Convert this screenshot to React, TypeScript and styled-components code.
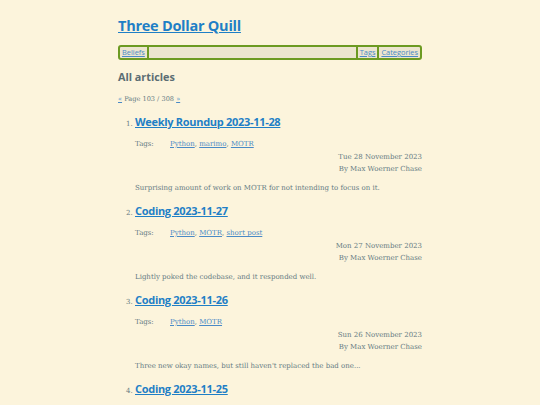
import React from "react";
import styled, { createGlobalStyle } from "styled-components";

const Global = createGlobalStyle`
  html, body { margin: 0; padding: 0; background: #fcf4dc; }
  body { font-family: "DejaVu Serif", serif; color: #657b83; }
  a { color: #2a7fc1; }
`;

const Page = styled.div`
  width: 304px;
  margin: 0 auto;
  padding-top: 15px;
`;

const Title = styled.h1`
  margin: 0;
  font-family: "Open Sans", sans-serif;
  font-weight: 700;
  font-size: 14.5px;
  letter-spacing: -0.25px;
  line-height: 22px;
  a { color: #1f7fc6; }
`;

const Nav = styled.nav`
  margin-top: 8px;
  display: flex;
  height: 11px;
  border: 2px solid #6c9a22;
  border-radius: 3px;
  background: #ece5cf;
  font-family: "Open Sans", sans-serif;
  font-size: 7.4px;
  line-height: 11px;
`;

const NavItem = styled.a<{ $side: "left" | "right" }>`
  padding: 0 2px;
  color: #4a8ac6;
  ${(p) => (p.$side === "right" ? "border-right: 2px solid #6c9a22;" : "border-left: 2px solid #6c9a22;")}
`;

const Spacer = styled.div`
  flex: 1;
`;

const Heading = styled.h2`
  margin: 8px 0 0;
  font-family: "Open Sans", sans-serif;
  font-weight: 700;
  font-size: 10.8px;
  line-height: 18px;
  color: #5b6d73;
`;

const Pager = styled.div`
  margin-top: 8px;
  font-size: 6.6px;
  line-height: 10px;
  color: #657b83;
  a { color: #4a8ac6; }
`;

const List = styled.ol`
  margin: 9px 0 0;
  padding-left: 17px;
`;

const Item = styled.li`
  font-size: 7px;
  color: #657b83;
  margin-bottom: 8px;
  &::marker { font-size: 7px; }
`;

const ItemTitle = styled.h3`
  display: inline;
  margin: 0;
  font-family: "Open Sans", sans-serif;
  font-weight: 700;
  font-size: 11px;
  letter-spacing: -0.3px;
  line-height: 18px;
  a { color: #1f7fc6; }
`;

const TagRow = styled.div`
  display: flex;
  margin-top: 8px;
  line-height: 10px;
`;

const TagLabel = styled.span`
  width: 35px;
`;

const TagLinks = styled.span`
  a { color: #4a8ac6; }
`;

const Meta = styled.div`
  margin-top: 2px;
  text-align: right;
  line-height: 12px;
`;

const Summary = styled.p`
  margin: 7px 0 0;
  line-height: 12px;
`;

type Article = { title: string; tags: string[]; date: string; summary: string };

const articles: Article[] = [
  {
    title: "Weekly Roundup 2023-11-28",
    tags: ["Python", "marimo", "MOTR"],
    date: "Tue 28 November 2023",
    summary: "Surprising amount of work on MOTR for not intending to focus on it.",
  },
  {
    title: "Coding 2023-11-27",
    tags: ["Python", "MOTR", "short post"],
    date: "Mon 27 November 2023",
    summary: "Lightly poked the codebase, and it responded well.",
  },
  {
    title: "Coding 2023-11-26",
    tags: ["Python", "MOTR"],
    date: "Sun 26 November 2023",
    summary: "Three new okay names, but still haven't replaced the bad one...",
  },
  {
    title: "Coding 2023-11-25",
    tags: ["Python", "MOTR"],
    date: "Sat 25 November 2023",
    summary: "",
  },
];

export default function App() {
  return (
    <>
      <Global />
      <Page>
        <Title>
          <a href="#">Three Dollar Quill</a>
        </Title>
        <Nav>
          <NavItem $side="right" href="#">Beliefs</NavItem>
          <Spacer />
          <NavItem $side="left" href="#">Tags</NavItem>
          <NavItem $side="left" href="#">Categories</NavItem>
        </Nav>
        <Heading>All articles</Heading>
        <Pager>
          <a href="#">«</a> Page 103 / 308 <a href="#">»</a>
        </Pager>
        <List>
          {articles.map((a) => (
            <Item key={a.title}>
              <ItemTitle>
                <a href="#">{a.title}</a>
              </ItemTitle>
              <TagRow>
                <TagLabel>Tags:</TagLabel>
                <TagLinks>
                  {a.tags.map((t, i) => (
                    <React.Fragment key={t}>
                      <a href="#">{t}</a>
                      {i < a.tags.length - 1 ? ", " : ""}
                    </React.Fragment>
                  ))}
                </TagLinks>
              </TagRow>
              <Meta>
                {a.date}
                <br />
                By Max Woerner Chase
              </Meta>
              <Summary>{a.summary}</Summary>
            </Item>
          ))}
        </List>
      </Page>
    </>
  );
}
